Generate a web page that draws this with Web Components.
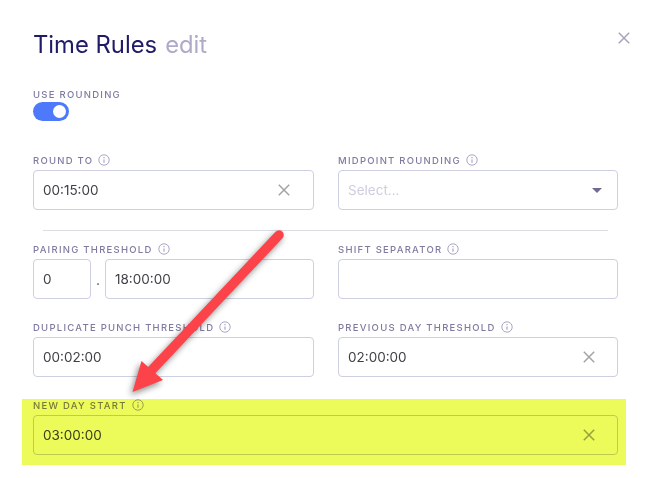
<!DOCTYPE html>
<html lang="en">
<head>
<meta charset="utf-8">
<title>Time Rules</title>
<style>
	html, body { margin: 0; background: #fff; }
	body { width: 656px; height: 478px; overflow: hidden; font-family: Inter, "Liberation Sans", sans-serif; }
	.wide { grid-column: 1 / -1; }
	.right { --x-gap: 13px; }
</style>
</head>
<body>
<time-rules>
	<toggle-field slot="toggle" label="Use rounding"></toggle-field>
	<form-field label="Round to" info><text-box value="00:15:00" clear></text-box></form-field>
	<form-field label="Midpoint rounding" info><text-box placeholder="Select..." caret></text-box></form-field>
	<hr-line></hr-line>
	<form-field label="Pairing threshold" info>
		<span-box>
			<text-box value="0" style="width:58px"></text-box>
			<span>.</span>
			<text-box value="18:00:00" style="flex:1"></text-box>
		</span-box>
	</form-field>
	<form-field label="Shift separator" info><text-box></text-box></form-field>
	<form-field label="Duplicate punch threshold" info><text-box value="00:02:00"></text-box></form-field>
	<form-field label="Previous day threshold" info class="right"><text-box value="02:00:00" clear></text-box></form-field>
	<form-field label="New day start" info class="wide right"><text-box value="03:00:00" clear></text-box></form-field>
</time-rules>
<script>
const INFO_ICON = `<svg width="12" height="12" viewBox="0 0 12 12" fill="none" stroke="currentColor"><circle cx="6" cy="6" r="5.2" stroke-width="1"/><path d="M6 5.4V8.8" stroke-width="1.2"/><path d="M6 3.1v1.2" stroke-width="1.2"/></svg>`;
const X_ICON = `<svg width="12" height="12" viewBox="0 0 12 12" fill="none" stroke="currentColor" stroke-width="1.5"><path d="M.8.8l10.4 10.4M11.2.8.8 11.2"/></svg>`;

class TimeRules extends HTMLElement {
	constructor() {
		super();
		this.attachShadow({ mode: "open" });
		this.shadowRoot.innerHTML = `
			<style>
				:host { display: block; position: relative; width: 656px; height: 478px; box-sizing: border-box; padding: 30px 38px 0 33px; }
				header { display: flex; align-items: baseline; gap: 8px; height: 30px; font-size: 23.8px; line-height: 30px; color: #1f1b66; }
				header em { font-style: normal; color: #aeabc9; }
				.close { position: absolute; left: 618px; top: 32px; color: #a5a3bd; display: flex; }
				.toggle { margin: 28px 0 31px; }
				.grid { display: grid; grid-template-columns: 281px 280px; column-gap: 24px; }
				.mark { position: absolute; left: 22px; top: 399px; width: 604px; height: 66px; background: #ecfb5a; mix-blend-mode: multiply; }
				.arrow { position: absolute; left: 0; top: 0; filter: drop-shadow(-2px 3px 3px rgba(0,0,0,.45)); }
			</style>
			<header>Time Rules <em>edit</em></header>
			<span class="close">${X_ICON}</span>
			<div class="toggle"><slot name="toggle"></slot></div>
			<div class="grid"><slot></slot></div>
			<div class="mark"></div>
			<svg class="arrow" width="656" height="478" viewBox="0 0 656 478">
				<path d="M279 235L150 372" stroke="#fb4349" stroke-width="9.5" stroke-linecap="round" fill="none"/>
				<path d="M132.5 392L141.5 361L163 380Z" fill="#fb4349"/>
			</svg>`;
	}
}
customElements.define("time-rules", TimeRules);

class FormField extends HTMLElement {
	constructor() {
		super();
		this.attachShadow({ mode: "open" });
		this.shadowRoot.innerHTML = `
			<style>
				:host { display: block; min-width: 0; margin-bottom: 20px; }
				label { display: flex; align-items: center; gap: 5px; height: 18px; padding-bottom: 1px; box-sizing: border-box; white-space: nowrap; font-size: 9.5px; font-weight: 500; letter-spacing: 1.26px; text-transform: uppercase; color: #7f7ba0; }
				label svg { color: #a9a6c4; margin-top: -2px; }
			</style>
			<label><span></span></label>
			<slot></slot>`;
	}
	connectedCallback() {
		this.shadowRoot.querySelector("span").textContent = this.getAttribute("label");
		if (this.hasAttribute("info")) {
			this.shadowRoot.querySelector("label").insertAdjacentHTML("beforeend", INFO_ICON);
		}
	}
}
customElements.define("form-field", FormField);

class ToggleField extends HTMLElement {
	constructor() {
		super();
		this.attachShadow({ mode: "open" });
		this.shadowRoot.innerHTML = `
			<style>
				:host { display: block; }
				label { display: block; height: 14px; line-height: 14px; font-size: 9.5px; font-weight: 500; letter-spacing: 1.26px; text-transform: uppercase; color: #7f7ba0; }
				.track { display: flex; justify-content: flex-end; align-items: center; box-sizing: border-box; width: 36px; height: 19px; padding-right: 3px; border-radius: 10px; background: #4f79fb; }
				.track i { width: 13px; height: 13px; border-radius: 50%; background: #fff; }
			</style>
			<label></label>
			<div class="track"><i></i></div>`;
	}
	connectedCallback() {
		this.shadowRoot.querySelector("label").textContent = this.getAttribute("label");
	}
}
customElements.define("toggle-field", ToggleField);

class TextBox extends HTMLElement {
	constructor() {
		super();
		this.attachShadow({ mode: "open" });
		this.shadowRoot.innerHTML = `
			<style>
				:host { display: flex; align-items: center; box-sizing: border-box; height: 40px; padding: 0 9px; background: #fff; border: 1px solid #cdd0e0; border-radius: 4px; font-size: 13.5px; color: #3f3f47; }
				span { flex: 1; white-space: nowrap; }
				span.ph { color: #cfcde0; }
				.x { display: flex; color: #a3a3a3; margin-right: var(--x-gap, 14px); }
				.caret { width: 0; height: 0; margin-right: 6px; border: 5px solid transparent; border-top: 5px solid #6f6b92; border-bottom: 0; }
			</style>
			<span></span>`;
	}
	connectedCallback() {
		const root = this.shadowRoot;
		if (this.hasAttribute("clear")) root.innerHTML += `<div class="x">${X_ICON}</div>`;
		if (this.hasAttribute("caret")) root.innerHTML += `<div class="caret"></div>`;
		const text = root.querySelector("span");
		text.textContent = this.getAttribute("value") || this.getAttribute("placeholder") || "";
		if (this.hasAttribute("placeholder")) text.className = "ph";
	}
}
customElements.define("text-box", TextBox);

class SpanBox extends HTMLElement {
	constructor() {
		super();
		this.attachShadow({ mode: "open" });
		this.shadowRoot.innerHTML = `
			<style>
				:host { display: flex; align-items: center; }
				::slotted(span) { width: 14px; text-align: center; font-size: 14px; color: #55555f; }
			</style>
			<slot></slot>`;
	}
}
customElements.define("span-box", SpanBox);

class HrLine extends HTMLElement {
	constructor() {
		super();
		this.attachShadow({ mode: "open" });
		this.shadowRoot.innerHTML = `
			<style>
				:host { display: block; grid-column: 1 / -1; height: 1px; margin: 0 10px 10px; background: #dcdde6; }
			</style>`;
	}
}
customElements.define("hr-line", HrLine);
</script>
</body>
</html>
